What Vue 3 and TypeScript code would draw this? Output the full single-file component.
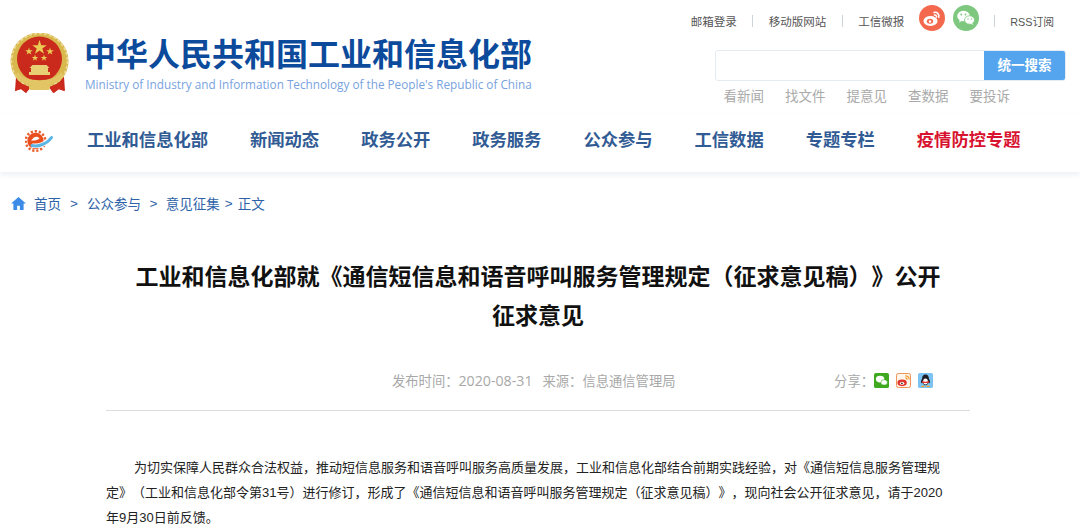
<template>
  <div class="page">
    <header class="masthead">
      <div class="brand">
        <svg class="emblem" viewBox="0 0 60 63" aria-hidden="true">
          <path d="M6 44l-1 14 6-2 5 4 5-6h18l5 6 5-4 6 2-1-14z" fill="#c8281c" />
          <ellipse cx="29.500" cy="28" rx="29" ry="28.500" fill="#d9b94e" />
          <ellipse cx="29.500" cy="28" rx="28" ry="27.500" fill="none" stroke="#ecdc9a" stroke-width="1.600" stroke-dasharray="3 2" />
          <circle cx="29.500" cy="26" r="22.500" fill="#c92a1c" />
          <path d="M29.500 7l1.700 5.200h5.500l-4.400 3.300 1.700 5.200-4.500-3.200-4.500 3.200 1.700-5.200-4.400-3.300h5.500z" fill="#eccb55" />
          <path d="M19 14.500l.9 2.700h2.900l-2.300 1.700.9 2.700-2.400-1.700-2.400 1.700.9-2.700-2.300-1.700h2.900z" fill="#eccb55" />
          <path d="M40 14.500l.9 2.700h2.900l-2.300 1.700.9 2.700-2.400-1.700-2.400 1.700.9-2.700-2.300-1.700h2.900z" fill="#eccb55" />
          <path d="M25 21.500l.8 2.400h2.500l-2 1.500.8 2.400-2.100-1.500-2.100 1.500.8-2.400-2-1.500h2.500z" fill="#eccb55" />
          <path d="M34 21.500l.8 2.400h2.500l-2 1.500.8 2.400-2.100-1.500-2.100 1.500.8-2.400-2-1.500h2.500z" fill="#eccb55" />
          <path d="M19 42v-3h2v-4h-1.500l3-3h14l3 3H38v4h2v3z" fill="#e9cf73" />
          <path d="M8 39c7 11 36 11 43 0l3 4c-8 13-41 13-49 0z" fill="#e2c665" />
          <path d="M8 49l-3 9 6-2 5 4 4-6z M51 49l3 9-6-2-5 4-4-6z" fill="#cf2b1d" />
          <rect x="19" y="52" width="21" height="5" rx="2" fill="#e2c665" />
        </svg>
        <div class="brand-text">
          <div class="brand-cn">中华人民共和国工业和信息化部</div>
          <div class="brand-en">Ministry of Industry and Information Technology of the People's Republic of China</div>
        </div>
      </div>
      <div class="tools">
        <div class="toplinks">
          <span>邮箱登录</span>
          <i class="sep"></i>
          <span>移动版网站</span>
          <i class="sep"></i>
          <span>工信微报</span>
          <svg class="round" viewBox="0 0 26 26" aria-hidden="true">
            <circle cx="13" cy="13" r="13" fill="#f4694e" />
            <ellipse cx="11.500" cy="16" rx="7" ry="5" fill="#fff" />
            <ellipse cx="11" cy="16.300" rx="3.200" ry="2.500" fill="#f4694e" />
            <circle cx="11" cy="16.500" r="1.200" fill="#fff" />
            <path d="M15 7.500c3-.8 5.500 1.500 4.800 4.800M15.500 10c1.400-.3 2.300.7 2 2" fill="none" stroke="#fff" stroke-width="1.500" stroke-linecap="round" />
          </svg>
          <svg class="round wechat" viewBox="0 0 26 26" aria-hidden="true">
            <circle cx="13" cy="13" r="13" fill="#7dc87e" />
            <ellipse cx="10.500" cy="11" rx="6.300" ry="5.200" fill="#fff" />
            <path d="M7 14.500l-1 3 3.500-2z" fill="#fff" />
            <ellipse cx="16.500" cy="15" rx="5" ry="4.200" fill="#fff" stroke="#7dc87e" stroke-width=".8" />
            <path d="M19 18l1.500 2-3.500-1.500z" fill="#fff" />
            <circle cx="8.300" cy="9.500" r=".9" fill="#7dc87e" />
            <circle cx="12.500" cy="9.500" r=".9" fill="#7dc87e" />
            <circle cx="15" cy="14" r=".7" fill="#7dc87e" />
            <circle cx="18.500" cy="14" r=".7" fill="#7dc87e" />
          </svg>
          <i class="sep sep-wide"></i>
          <span class="rss">RSS订阅</span>
        </div>
        <div class="search">
          <div class="search-input"></div>
          <div class="search-btn">统一搜索</div>
        </div>
        <div class="quick">
          <span v-for="q in quickLinks" :key="q">{{ q }}</span>
        </div>
      </div>
    </header>

    <nav class="nav">
      <svg class="nav-logo" viewBox="0 0 28 22" aria-hidden="true">
        <circle cx="10.500" cy="11" r="9.800" fill="none" stroke="#ea5a28" stroke-width="2.400" stroke-dasharray="2.200 1.900" />
        <circle cx="10.500" cy="11" r="8.200" fill="#ea4f1e" />
        <path d="M6 10.500c3 .2 6-.3 8.500-1.800-1.500-2.600-5-2.400-7 .2" fill="#fff" />
        <path d="M7 15.500C13 17 22 14 26.500 7.500" fill="none" stroke="#fff" stroke-width="4.600" />
        <path d="M7 15.500C13 17 22 14 26.500 7.500" fill="none" stroke="#5cb6e4" stroke-width="3" stroke-linecap="round" />
      </svg>
      <a v-for="item in navItems" :key="item" class="nav-item" :class="{ alert: item === '疫情防控专题' }">{{ item }}</a>
    </nav>

    <div class="crumbs">
      <svg class="home" viewBox="0 0 16 14" aria-hidden="true">
        <path d="M8 0L0 7h2.500v7h4V9.500h3V14h4V7H16z" fill="#3c8ce7" />
      </svg>
      <span class="c-first">首页</span>
      <span class="gt">&gt;</span>
      <span>公众参与</span>
      <span class="gt second">&gt;</span>
      <span>意见征集</span>
      <span class="gt tight">&gt;</span>
      <span>正文</span>
    </div>

    <main class="article">
      <h1>工业和信息化部就《通信短信息和语音呼叫服务管理规定（征求意见稿）》公开征求意见</h1>
      <div class="meta">
        <div class="meta-info">
          <span>发布时间：<span class="date">2020-08-31</span></span>
          <span>来源：信息通信管理局</span>
        </div>
        <div class="share">
          <span>分享：</span>
          <svg viewBox="0 0 16 16" aria-hidden="true">
            <rect width="16" height="16" rx="2" fill="#3fa91f" />
            <ellipse cx="6.500" cy="6.500" rx="4.500" ry="3.600" fill="#fff" />
            <ellipse cx="10.800" cy="10" rx="3.500" ry="2.900" fill="#fff" stroke="#3fa91f" stroke-width=".6" />
          </svg>
          <svg viewBox="0 0 16 16" aria-hidden="true">
            <rect x=".5" y=".5" width="15" height="15" rx="2" fill="#fff5ea" stroke="#ef8a4a" />
            <ellipse cx="6.500" cy="10.500" rx="5" ry="3.500" fill="#e0322a" />
            <ellipse cx="6.500" cy="10.800" rx="2.300" ry="1.600" fill="#fff" />
            <circle cx="6.300" cy="10.900" r=".9" fill="#222" />
            <path d="M10 3c2.500 0 4 1.500 4 4M10 5.300c1 0 1.800.7 1.800 1.800" fill="none" stroke="#f59a2f" stroke-width="1.300" />
          </svg>
          <svg viewBox="0 0 16 16" aria-hidden="true">
            <rect width="16" height="16" rx="2" fill="#7cc2f2" />
            <path d="M8 1.500c-2.500 0-3.500 2-3.500 4-1 2-1.800 4-1 5.500l1.200-.8c.5 1.500 1.500 2.800 3.300 2.800s2.800-1.300 3.300-2.800l1.200.8c.8-1.500 0-3.500-1-5.500 0-2-1-4-3.500-4z" fill="#1c1c22" />
            <ellipse cx="8" cy="9" rx="2.500" ry="3.200" fill="#fff" />
            <path d="M4.500 8.500c2 1 5 1 7 0l.5 1.500c-2.500 1-5.500 1-8 0z" fill="#e3352b" />
            <path d="M3.500 13.500h3.500v1.500H3.500zM9 13.500h3.500V15H9z" fill="#f5a623" />
          </svg>
        </div>
      </div>
      <p>为切实保障人民群众合法权益，推动短信息服务和语音呼叫服务高质量发展，工业和信息化部结合前期实践经验，对《通信短信息服务管理规定》（工业和信息化部令第31号）进行修订，形成了《通信短信息和语音呼叫服务管理规定（征求意见稿）》，现向社会公开征求意见，请于2020年9月30日前反馈。</p>
    </main>
  </div>
</template>

<script setup lang="ts">
const quickLinks: string[] = ['看新闻', '找文件', '提意见', '查数据', '要投诉']
const navItems: string[] = [
  '工业和信息化部',
  '新闻动态',
  '政务公开',
  '政务服务',
  '公众参与',
  '工信数据',
  '专题专栏',
  '疫情防控专题',
]
</script>

<style>
html,
body {
  margin: 0;
  background: #fff;
  overflow: hidden;
}
</style>

<style scoped>
.page {
  width: 1080px;
  height: 528px;
  overflow: hidden;
  font-family: "Liberation Sans", "Noto Sans CJK SC", sans-serif;
  color: #222;
  text-spacing-trim: space-all;
}

.masthead {
  display: flex;
  justify-content: space-between;
  height: 114px;
  padding: 0 14px 0 10px;
}

.brand {
  display: flex;
  gap: 15px;
  padding-top: 33px;
}

.emblem {
  width: 60px;
  height: 63px;
}

.brand-cn {
  margin-top: 3px;
  margin-left: -1px;
  font-size: 32px;
  line-height: 38px;
  font-weight: 700;
  color: #0c4a9c;
  white-space: nowrap;
}

.brand-en {
  margin-top: 2px;
  font-family: "Open Sans", sans-serif;
  font-size: 11.750px;
  line-height: 16px;
  color: #78a3e0;
  white-space: nowrap;
}

.tools {
  display: flex;
  flex-direction: column;
  align-items: flex-end;
  width: 375px;
}

.toplinks {
  display: flex;
  align-items: center;
  height: 24px;
  margin-top: 9px;
  padding-right: 12px;
  font-size: 11.500px;
  color: #555;
  white-space: nowrap;
}

.rss {
  font-size: 10.800px;
}

.sep {
  width: 1px;
  height: 12px;
  margin: 0 15.500px;
  background: #ccd5dc;
}

.sep-wide {
  margin: 0 15px 0 15px;
}

.round {
  width: 26px;
  height: 26px;
  margin: -6px 0 0 15px;
}

.round.wechat {
  margin-left: 8px;
}

.search {
  display: flex;
  width: 351px;
  height: 31px;
  margin-top: 17px;
  border: 1px solid #e3ebf3;
  border-radius: 3px;
  box-sizing: border-box;
  overflow: hidden;
}

.search-input {
  flex: 1;
}

.search-btn {
  width: 81px;
  background: #55a5ee;
  color: #fff;
  font-size: 13.500px;
  font-weight: 700;
  line-height: 29px;
  text-align: center;
}

.quick {
  display: flex;
  gap: 21px;
  margin-top: 7px;
  padding-right: 56px;
  font-size: 13.500px;
  line-height: 18px;
  color: #aaa;
}

.nav {
  display: flex;
  align-items: center;
  height: 58px;
  box-sizing: border-box;
  padding: 0 0 10px 25px;
  box-shadow: 0 3px 5px rgba(225, 230, 240, 0.6);
}

.nav-logo {
  width: 28px;
  height: 22px;
  margin: 6px 34px 0 0;
}

.nav-item {
  margin-right: 42px;
  font-size: 17.300px;
  font-weight: 700;
  color: #315b94;
  white-space: nowrap;
}

.nav-item.alert {
  color: #d8132f;
}

.crumbs {
  display: flex;
  align-items: center;
  height: 20px;
  margin-top: 21px;
  padding-left: 11px;
  font-size: 13.500px;
  color: #2e62a8;
}

.home {
  width: 15px;
  height: 13px;
  margin-right: 8px;
}

.gt {
  margin: 0 9px;
}

.gt.second {
  margin: 0 8.500px;
}

.gt.tight {
  margin: 0 5px;
}

.article {
  width: 864px;
  margin-left: 106px;
}

h1 {
  width: 810px;
  margin: 45px auto 0;
  font-size: 23px;
  line-height: 39px;
  font-weight: 700;
  text-align: center;
  color: #111;
}

.meta {
  display: flex;
  align-items: center;
  justify-content: space-between;
  height: 41px;
  margin-top: 24px;
  padding: 0 37px 9px 286px;
  border-bottom: 1px solid #ddd;
  font-family: "Open Sans", "Noto Sans CJK SC", sans-serif;
  font-size: 13.300px;
  color: #a8a8a8;
}

.meta-info {
  display: flex;
  gap: 10px;
}

.date {
  font-size: 14.200px;
}

.share {
  display: flex;
  align-items: center;
}

.share svg {
  width: 15px;
  height: 15px;
  margin-left: 7px;
}

.share svg:first-of-type {
  margin-left: 0;
}

p {
  margin: 44px 0 0;
  padding-right: 26px;
  font-size: 13px;
  line-height: 25px;
  text-indent: 28px;
  color: #222;
}
</style>
